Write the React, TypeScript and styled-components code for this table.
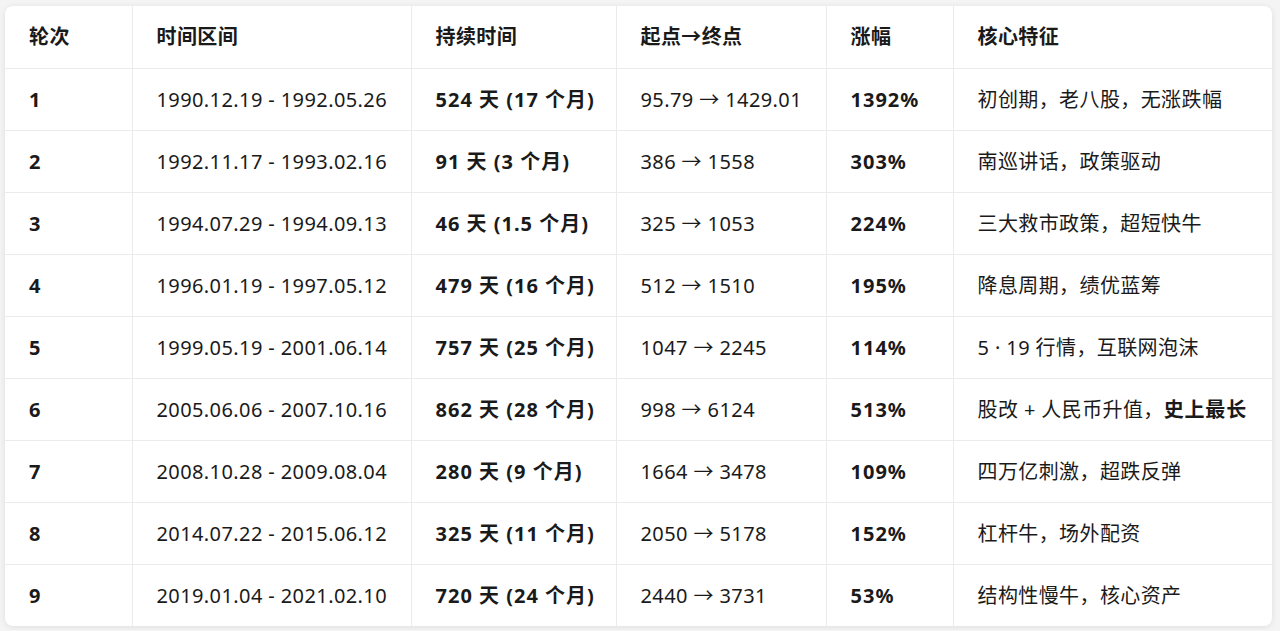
import React from "react";
import styled, { createGlobalStyle } from "styled-components";

const GlobalStyle = createGlobalStyle`
  html, body {
    margin: 0;
    padding: 0;
    background: #f4f4f4;
  }
  body {
    font-family: "Noto Sans", "Noto Sans CJK SC", sans-serif;
    color: #1a1a1a;
  }
`;

const rows = [
  { no: "1", range: "1990.12.19 - 1992.05.26", days: "524 天 (17 个月)", path: "95.79 → 1429.01", gain: "1392%", note: "初创期，老八股，无涨跌幅" },
  { no: "2", range: "1992.11.17 - 1993.02.16", days: "91 天 (3 个月)", path: "386 → 1558", gain: "303%", note: "南巡讲话，政策驱动" },
  { no: "3", range: "1994.07.29 - 1994.09.13", days: "46 天 (1.5 个月)", path: "325 → 1053", gain: "224%", note: "三大救市政策，超短快牛" },
  { no: "4", range: "1996.01.19 - 1997.05.12", days: "479 天 (16 个月)", path: "512 → 1510", gain: "195%", note: "降息周期，绩优蓝筹" },
  { no: "5", range: "1999.05.19 - 2001.06.14", days: "757 天 (25 个月)", path: "1047 → 2245", gain: "114%", note: "5 · 19 行情，互联网泡沫" },
  { no: "6", range: "2005.06.06 - 2007.10.16", days: "862 天 (28 个月)", path: "998 → 6124", gain: "513%", note: "股改 + 人民币升值，", strong: "史上最长" },
  { no: "7", range: "2008.10.28 - 2009.08.04", days: "280 天 (9 个月)", path: "1664 → 3478", gain: "109%", note: "四万亿刺激，超跌反弹" },
  { no: "8", range: "2014.07.22 - 2015.06.12", days: "325 天 (11 个月)", path: "2050 → 5178", gain: "152%", note: "杠杆牛，场外配资" },
  { no: "9", range: "2019.01.04 - 2021.02.10", days: "720 天 (24 个月)", path: "2440 → 3731", gain: "53%", note: "结构性慢牛，核心资产" },
];

const widths = [127, 279, 205, 210, 127, 319];
const headers = ["轮次", "时间区间", "持续时间", "起点→终点", "涨幅", "核心特征"];

export default function App() {
  return (
    <>
      <GlobalStyle />
      <Page>
        <Card>
          <Table>
            <colgroup>
              {widths.map((w, i) => (
                <col key={i} style={{ width: w }} />
              ))}
            </colgroup>
            <thead>
              <tr>
                {headers.map((h) => (
                  <Th key={h}>{h}</Th>
                ))}
              </tr>
            </thead>
            <tbody>
              {rows.map((r) => (
                <Row key={r.no}>
                  <Td $bold>{r.no}</Td>
                  <Td>{r.range}</Td>
                  <Td $bold>{r.days}</Td>
                  <Td>{r.path}</Td>
                  <Td $bold>{r.gain}</Td>
                  <Td>
                    {r.note}
                    {r.strong && <Strong>{r.strong}</Strong>}
                  </Td>
                </Row>
              ))}
            </tbody>
          </Table>
        </Card>
      </Page>
    </>
  );
}

const Page = styled.div`
  padding: 6px 8px 4px 5px;
`;

const Card = styled.div`
  background: #ffffff;
  border-radius: 8px;
  box-shadow: 0 1px 6px rgba(0, 0, 0, 0.09);
  overflow: hidden;
`;

const Table = styled.table`
  width: 100%;
  table-layout: fixed;
  border-collapse: collapse;
  font-size: 20px;
  line-height: 28px;
  letter-spacing: 0.4px;
`;

const Th = styled.th`
  height: 62px;
  padding: 0 24px;
  text-align: left;
  font-weight: 700;
  white-space: nowrap;
  border-bottom: 1px solid #ebebeb;
  border-left: 1px solid #ebebeb;
  &:first-child {
    border-left: none;
  }
`;

const Row = styled.tr`
  &:last-child td {
    border-bottom: none;
  }
`;

const Td = styled.td<{ $bold?: boolean }>`
  height: 61px;
  padding: 0 24px;
  white-space: nowrap;
  font-weight: ${(p) => (p.$bold ? 700 : 400)};
  letter-spacing: ${(p) => (p.$bold ? "1px" : "0.4px")};
  border-bottom: 1px solid #ebebeb;
  border-left: 1px solid #ebebeb;
  &:first-child {
    border-left: none;
  }
`;

const Strong = styled.strong`
  font-weight: 700;
  letter-spacing: 0.8px;
`;
